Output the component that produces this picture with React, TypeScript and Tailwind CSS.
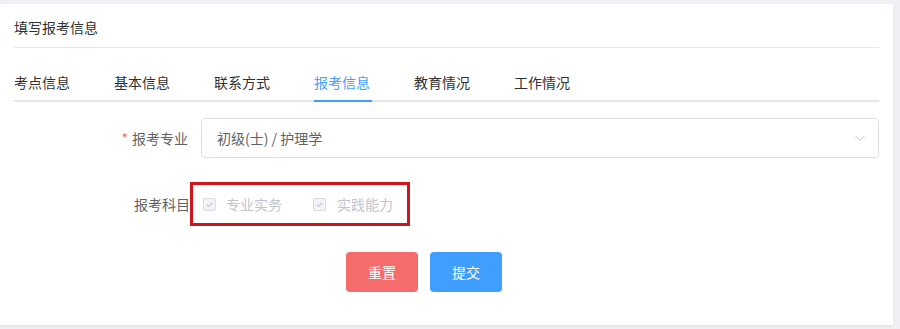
import React from "react";

const tabs = ["考点信息", "基本信息", "联系方式", "报考信息", "教育情况", "工作情况"];

const Check = () => (
  <span className="flex h-[13px] w-[13px] items-center justify-center rounded-[2px] border border-[#d8dce3] bg-[#f2f4f7]">
    <svg width="9" height="9" viewBox="0 0 10 10" fill="none">
      <path d="M2 5.2 L4.2 7.3 L8.2 2.8" stroke="#c0c4cc" strokeWidth="1.2" />
    </svg>
  </span>
);

const App = () => {
  return (
    <div
      className="h-[329px] w-[900px] bg-[#eef0f3] pt-[4px] pr-[7px] pb-[4px]"
      style={{ fontFamily: '"Noto Sans CJK SC", "Noto Sans", sans-serif' }}
    >
      <div className="h-[321px] bg-white px-[14px] shadow-[0_1px_3px_rgba(0,0,0,0.08)]">
        <div className="flex h-[43px] items-end pb-[9px] text-[14px] text-[#303133]">
          填写报考信息
        </div>
        <div className="h-px bg-[#e4e7ed]" />

        <div className="mt-[24px] flex gap-[42px] border-b-2 border-[#e4e7ed] text-[14px]">
          {tabs.map((t) => (
            <div
              key={t}
              className={
                t === "报考信息"
                  ? "relative w-[58px] pb-[7px] text-[#409eff]"
                  : "w-[58px] pb-[7px] text-[#303133]"
              }
            >
              {t}
              {t === "报考信息" && (
                <span className="absolute right-0 bottom-[-2px] left-0 h-[2px] bg-[#409eff]" />
              )}
            </div>
          ))}
        </div>

        <div className="mt-[16px] flex items-center">
          <div className="w-[187px] pr-[13px] text-right text-[14px] text-[#606266]">
            <span className="mr-[4px] text-[#f56c6c]">*</span>报考专业
          </div>
          <div className="flex h-[40px] flex-1 items-center justify-between rounded-[4px] border border-[#dcdfe6] pr-[12px] pl-[15px] text-[14px] text-[#606266]">
            <span>初级(士) / 护理学</span>
            <svg width="12" height="12" viewBox="0 0 12 12" fill="none">
              <path d="M1.5 4 L6 8.5 L10.5 4" stroke="#c0c4cc" strokeWidth="1" />
            </svg>
          </div>
        </div>

        <div className="mt-[24px] flex items-center">
          <div className="w-[176px] text-right text-[14px] text-[#606266]">报考科目</div>
          <div className="flex h-[44px] w-[220px] items-center border-[3px] border-[#d0141b] pl-[10px] text-[14px] text-[#c0c4cc]">
            <Check />
            <span className="ml-[10px]">专业实务</span>
            <span className="ml-[31px]">
              <Check />
            </span>
            <span className="ml-[11px]">实践能力</span>
          </div>
        </div>

        <div className="mt-[26px] ml-[332px] flex gap-[12px] text-[14px] text-white">
          <button className="h-[40px] w-[72px] rounded-[4px] bg-[#f56c6c]">重置</button>
          <button className="h-[40px] w-[72px] rounded-[4px] bg-[#409eff]">提交</button>
        </div>
      </div>
    </div>
  );
};

export default App;
